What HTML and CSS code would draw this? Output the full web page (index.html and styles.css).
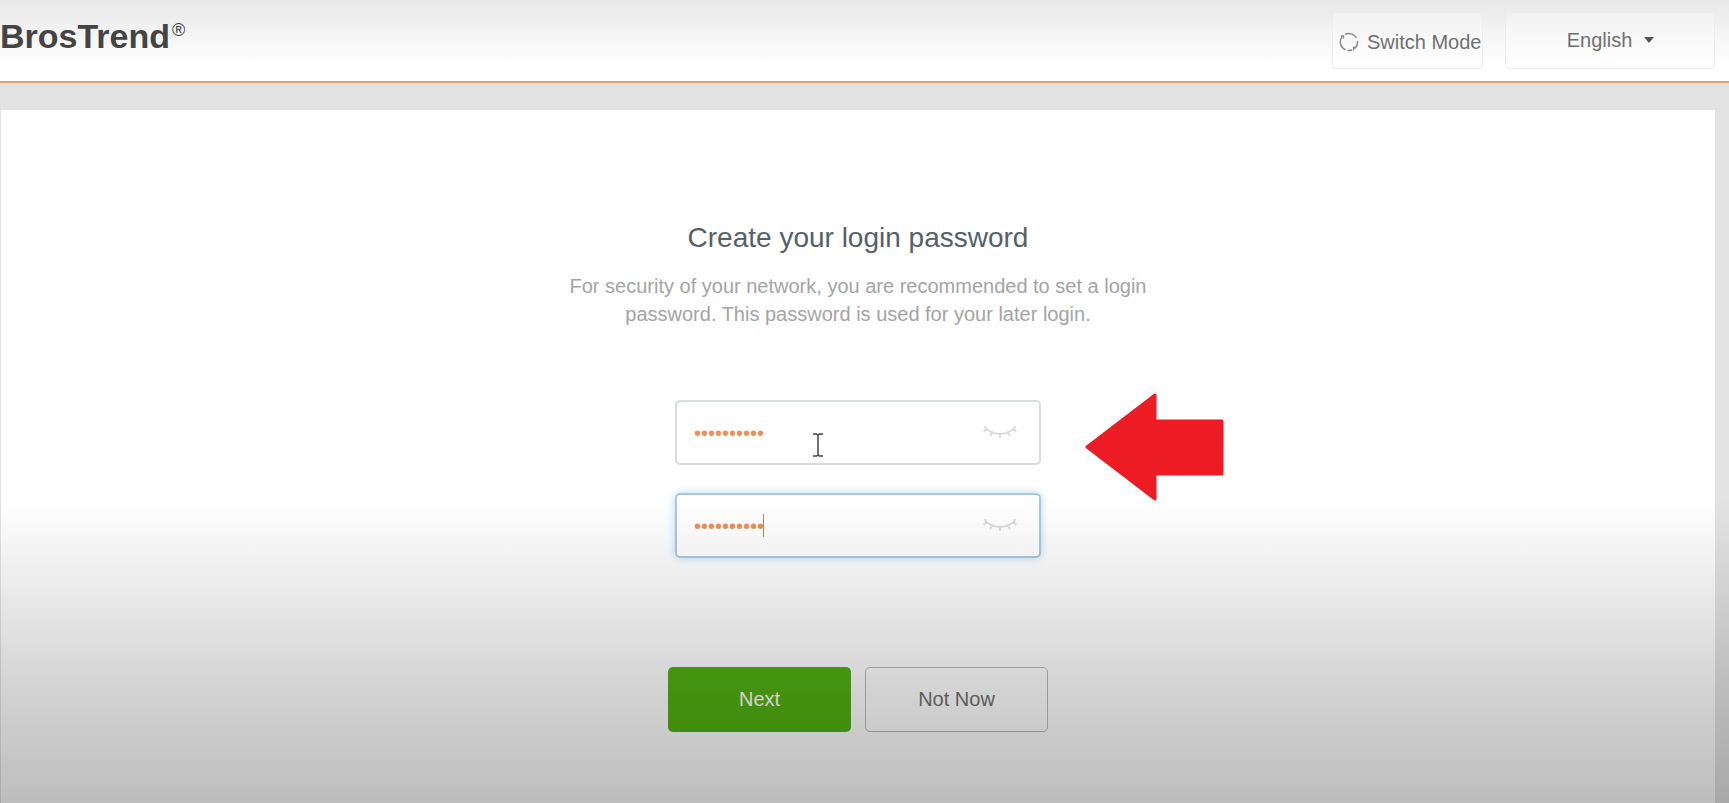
FILE: index.html
```html
<!DOCTYPE html>
<html lang="en">
<head>
<meta charset="utf-8">
<title>BrosTrend – Create your login password</title>
<link rel="stylesheet" href="styles.css">
</head>
<body>
<header class="topbar">
  <div class="brand">BrosTrend<sup class="brand-mark">®</sup></div>
  <div class="tools">
    <button class="switch-mode" type="button">
      <svg class="switch-icon" viewBox="0 0 20 20" aria-hidden="true">
        <path d="M6.500 17.800A8.500 8.500 0 0 1 3 5M6 2.500A8.500 8.500 0 0 1 17.500 6M18.500 9A8.500 8.500 0 0 1 15.500 16.500M13 18A8.500 8.500 0 0 1 8.500 18.400" />
        <path d="M2 4H4.500V6.500M14.500 18.500V15.500H17" />
      </svg>
      Switch Mode
    </button>
    <div class="language">
      <select class="language-select" aria-label="Language">
        <option>English</option>
      </select>
      <svg class="language-arrow" viewBox="0 0 10 6" aria-hidden="true"><path d="M0 0H10L5 6Z"/></svg>
    </div>
  </div>
</header>
<main class="card">
  <h1 class="title">Create your login password</h1>
  <p class="hint">For security of your network, you are recommended to set a login password. This password is used for your later login.</p>
  <form class="form">
    <div class="field">
      <input class="password" type="password" value="password12" aria-label="Login password">
      <button class="reveal" type="button" aria-label="Show password">
        <svg viewBox="0 0 34 16"><path d="M2 3Q17 15 32 3M2 1L3 4L1 7M9.500 7L7 11M17 9V13M24.500 7L27 11M32 1L31 4L33 7"/></svg>
      </button>
      <svg class="pointer" viewBox="0 0 12 24" aria-hidden="true"><path d="M1 1H4.500L6 2L7.500 1H11M6 2V22M1 23H4.500L6 22L7.500 23H11"/></svg>
      <svg class="arrow" viewBox="0 0 140 108" aria-hidden="true"><path d="M3 54L71 2V28H138V81H71V106Z"/></svg>
    </div>
    <div class="field">
      <input class="password password-active" type="password" value="password12" aria-label="Confirm password">
      <span class="caret"></span>
      <button class="reveal" type="button" aria-label="Show password">
        <svg viewBox="0 0 34 16"><path d="M2 3Q17 15 32 3M2 1L3 4L1 7M9.500 7L7 11M17 9V13M24.500 7L27 11M32 1L31 4L33 7"/></svg>
      </button>
    </div>
    <div class="actions">
      <button class="btn btn-next" type="button">Next</button>
      <button class="btn btn-skip" type="button">Not Now</button>
    </div>
  </form>
</main>
<div class="shade"></div>
</body>
</html>
```
FILE: styles.css
```css
* {
  box-sizing: border-box;
}

body {
  margin: 0;
  min-height: 100vh;
  display: flex;
  flex-direction: column;
  background: #e3e3e3;
  color: #707070;
  font: 20px/28px "Liberation Sans", Arial, sans-serif;
}

button,
input,
select {
  font: inherit;
  color: inherit;
}

.topbar {
  display: flex;
  justify-content: space-between;
  align-items: flex-start;
  padding: 12px 14px 12px 0;
  background: linear-gradient(#e8e8e8, #fff 64px);
  border-bottom: 2px solid #d6a580;
  box-shadow: 0 2px 1px #efd9ca;
}

.brand {
  padding: 4px 0 0;
  color: #444;
  font-size: 34px;
  font-weight: bold;
  line-height: 40px;
}

.brand-mark {
  margin-left: 2px;
  font-size: 18px;
  font-weight: normal;
  line-height: 0;
  vertical-align: 12px;
}

.tools {
  display: flex;
  gap: 22px;
}

.switch-mode,
.language-select {
  height: 57px;
  border: 1px solid #ececec;
  border-radius: 4px;
  background: rgba(255, 255, 255, 0.3);
}

.switch-mode {
  display: flex;
  align-items: center;
  gap: 8px;
  padding: 2px 0 0 6px;
  width: 151px;
  white-space: nowrap;
}

.switch-icon {
  flex: none;
  width: 20px;
  height: 20px;
  fill: none;
  stroke: #888;
  stroke-width: 1.4;
}

.language {
  position: relative;
}

.language-select {
  display: block;
  width: 210px;
  padding: 0 21px 2px 0;
  appearance: none;
  text-align: center;
  text-align-last: center;
}

.language-arrow {
  position: absolute;
  top: 25px;
  right: 61px;
  width: 10px;
  height: 6px;
  fill: #555;
  pointer-events: none;
}

.card {
  flex: 1;
  display: flex;
  flex-direction: column;
  align-items: center;
  margin: 27px 14px 0 1px;
  padding: 112px 16px 64px;
  background: #fff;
}

.title {
  margin: 0 0 18px;
  color: #566166;
  font-size: 28px;
  font-weight: normal;
  line-height: 32px;
}

.hint {
  max-width: 600px;
  margin: 0 0 72px;
  color: #a4a4a4;
  text-align: center;
}

.form {
  display: flex;
  flex-direction: column;
  align-items: center;
  gap: 28px;
}

.field {
  position: relative;
  width: 366px;
}

.password {
  display: block;
  width: 100%;
  height: 65px;
  padding: 2px 64px 0 17px;
  border: 2px solid #d9dcdc;
  border-radius: 5px;
  outline: 0;
  background: #fff;
  color: #ea9155;
}

.password-active {
  border-color: #a9c9e2;
  box-shadow: 0 0 8px #b5daf3;
}

.reveal {
  position: absolute;
  top: 25px;
  right: 24px;
  width: 34px;
  height: 16px;
  padding: 0;
  border: 0;
  background: none;
}

.reveal svg {
  display: block;
  fill: none;
  stroke: #dcdcdc;
  stroke-width: 2;
}

.caret {
  position: absolute;
  top: 21px;
  left: 88px;
  width: 1px;
  height: 23px;
  background: #b9845f;
}

.pointer {
  position: absolute;
  top: 33px;
  left: 137px;
  width: 12px;
  height: 24px;
  fill: none;
  stroke: #444;
  stroke-width: 1.5;
}

.arrow {
  position: absolute;
  top: -7px;
  left: 409px;
  width: 140px;
  height: 108px;
  fill: #ed1c24;
  stroke: #ed1c24;
  stroke-width: 3;
  stroke-linejoin: round;
}

.actions {
  display: flex;
  gap: 14px;
  margin-top: 81px;
}

.btn {
  width: 183px;
  height: 65px;
  padding: 0 0 2px;
  border: 0;
  border-radius: 5px;
}

.btn-next {
  background: #52b012;
  color: #fff;
}

.btn-skip {
  border: 1px solid #b8babb;
  background: none;
}

.shade {
  position: absolute;
  inset: 62% 0 0;
  background: linear-gradient(transparent, rgba(0, 0, 0, 0.06) 22%, rgba(0, 0, 0, 0.175) 64%, rgba(0, 0, 0, 0.26));
  pointer-events: none;
}
```
